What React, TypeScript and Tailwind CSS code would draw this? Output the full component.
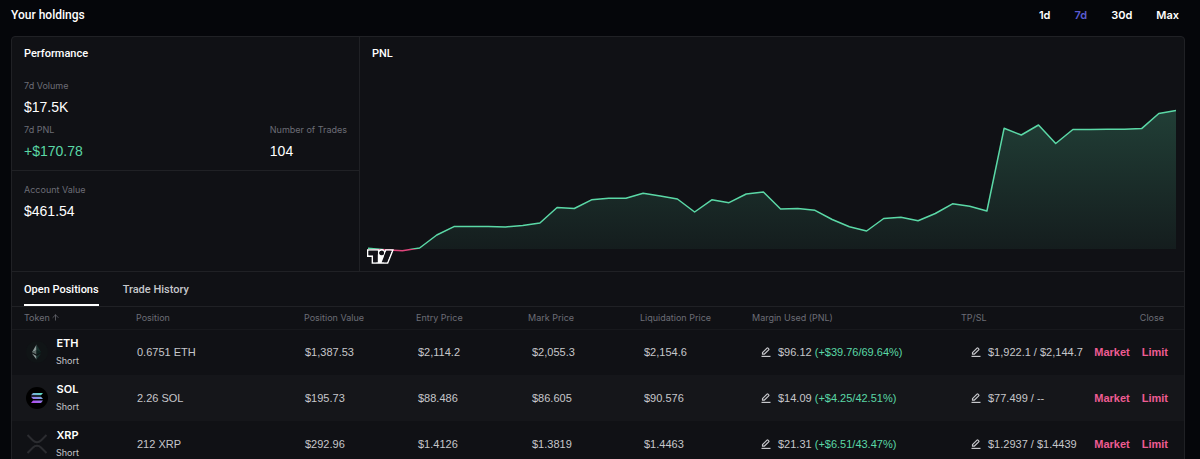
import { useState } from "react";
import clsx from "clsx";
import { ArrowUp } from "lucide-react";

type Position = {
  token: string;
  size: string;
  value: string;
  entry: string;
  mark: string;
  liquidation: string;
  margin: string;
  pnl: string;
  tpsl: string;
};

const positions: Position[] = [
  {
    token: "ETH",
    size: "0.6751 ETH",
    value: "$1,387.53",
    entry: "$2,114.2",
    mark: "$2,055.3",
    liquidation: "$2,154.6",
    margin: "$96.12",
    pnl: "(+$39.76/69.64%)",
    tpsl: "$1,922.1 / $2,144.7",
  },
  {
    token: "SOL",
    size: "2.26 SOL",
    value: "$195.73",
    entry: "$88.486",
    mark: "$86.605",
    liquidation: "$90.576",
    margin: "$14.09",
    pnl: "(+$4.25/42.51%)",
    tpsl: "$77.499 / --",
  },
  {
    token: "XRP",
    size: "212 XRP",
    value: "$292.96",
    entry: "$1.4126",
    mark: "$1.3819",
    liquidation: "$1.4463",
    margin: "$21.31",
    pnl: "(+$6.51/43.47%)",
    tpsl: "$1.2937 / $1.4439",
  },
];

const ranges = ["1d", "7d", "30d", "Max"];
const tabs = ["Open Positions", "Trade History"];

// PNL samples, in chart units above the zero line
const pnlSeries = [
  0.7, -0.7, -1.7, 1, 14, 22.4, 22.4, 22.4, 22, 23.5, 26, 41.5, 40.5, 49.2,
  50.8, 50.8, 55.7, 53, 50, 37, 49.2, 46.3, 55, 57, 40, 40.5, 38.7, 29.5, 22.2,
  18, 30.5, 31.7, 28.2, 35.5, 45.2, 42.8, 38, 120.7, 114, 124, 105.5, 119.5,
  119.4, 119.7, 119.8, 120.4, 135.5, 138.5,
];

const CHART_W = 808;
const CHART_H = 180;
const ZERO_Y = 158;

const PnlChart = () => {
  const step = CHART_W / (pnlSeries.length - 1);
  const line = pnlSeries
    .map((v, i) => `${(i * step).toFixed(1)},${(ZERO_Y - v).toFixed(1)}`)
    .join(" ");

  return (
    <svg
      viewBox={`0 0 ${CHART_W} ${CHART_H}`}
      preserveAspectRatio="none"
      className="block h-[180px] w-full"
      role="img"
      aria-label="PNL chart"
    >
      <defs>
        <linearGradient id="area" gradientUnits="userSpaceOnUse" x1="0" y1="18" x2="0" y2={ZERO_Y}>
          <stop offset="0" stopColor="#5ad8a6" stopOpacity="0.23" />
          <stop offset="1" stopColor="#5ad8a6" stopOpacity="0.06" />
        </linearGradient>
        <linearGradient id="stroke" gradientUnits="userSpaceOnUse" x1="0" y1="0" x2="0" y2={ZERO_Y * 2}>
          <stop offset="0.5" stopColor="#5ad8a6" />
          <stop offset="0.5" stopColor="#e0457b" />
        </linearGradient>
        <clipPath id="above">
          <rect width={CHART_W} height={ZERO_Y} />
        </clipPath>
      </defs>
      <polygon
        points={`0,${ZERO_Y} ${line} ${CHART_W},${ZERO_Y}`}
        fill="url(#area)"
        clipPath="url(#above)"
      />
      <polyline
        points={line}
        fill="none"
        stroke="url(#stroke)"
        strokeWidth="1.5"
        strokeLinejoin="round"
        vectorEffect="non-scaling-stroke"
      />
    </svg>
  );
};

const TradingViewLogo = () => (
  <svg viewBox="0 0 35 19" className="h-[15px] w-[27px]" fillRule="evenodd" aria-hidden="true">
    <path
      fill="#fff"
      d="M2 0H0v10h6v9h21.4l.5-1.3 6-15 1-2.7H23.7l-.5 1.3-.2.6a5 5 0 0 0-7-.9V0H2Zm20 17h4l5.2-13 .8-2h-7l-1 2.5-.2.5-1.5 3.8-.3.7V17Zm-.8-10a3 3 0 0 0 .7-2.7A3 3 0 1 0 16.8 7h4.4ZM14 7V2H2v6h6v9h4V7h2Z"
    />
    <path
      fill="#131319"
      d="M14 2H2v6h6v9h6V2Zm12 15h-7l6-15h7l-6 15Zm-7-9a3 3 0 1 0 0-6 3 3 0 0 0 0 6Z"
    />
  </svg>
);

const TokenIcon = ({ token }: { token: string }) => {
  if (token === "ETH") {
    return (
      <svg viewBox="0 0 24 24" className="size-6" aria-hidden="true">
        <circle cx="12" cy="12" r="11" fill="#101416" />
        <path d="M11.500 4.500v5.700L7 12.200Z" fill="#8b9a99" />
        <path d="M11.500 4.500l4.500 7.700-4.500-2Z" fill="#16302c" />
        <path d="M7 12.200l4.500-2v4.400Z" fill="#5c6866" />
        <path d="M11.500 10.200l4.500 2-4.500 2.400Z" fill="#0d2320" />
        <path d="M7 13.400l4.500 2.600V19.500Z" fill="#8b9a99" />
        <path d="M16 13.400l-4.500 2.600V19.500Z" fill="#16302c" />
      </svg>
    );
  }
  if (token === "SOL") {
    return (
      <svg viewBox="0 0 24 24" className="size-6" aria-hidden="true">
        <defs>
          <linearGradient id="sol" gradientUnits="userSpaceOnUse" x1="10" y1="17" x2="14" y2="7">
            <stop offset="0" stopColor="#b04df0" />
            <stop offset="0.5" stopColor="#8b8ce6" />
            <stop offset="1" stopColor="#5fd9c4" />
          </linearGradient>
        </defs>
        <circle cx="12" cy="12" r="11" fill="#000" />
        <path
          fill="url(#sol)"
          d="M8 7h10l-2 2.300H6Zm-2 3.800h10l2 2.300H8Zm2 3.800h10l-2 2.300H6Z"
        />
      </svg>
    );
  }
  return (
    <svg
      viewBox="0 0 24 24"
      className="size-6"
      fill="none"
      stroke="#2b2c30"
      strokeWidth="2"
      aria-hidden="true"
    >
      <path d="M2.500 3l5.500 5.500a5.700 5.700 0 0 0 8 0L21.500 3" />
      <path d="M2.500 21l5.500-5.500a5.700 5.700 0 0 1 8 0l5.500 5.500" />
    </svg>
  );
};

const EditButton = ({ label }: { label: string }) => (
  <button type="button" aria-label={label} className="shrink-0 text-[#c6c7cb]">
    <svg
      viewBox="0 0 10 10"
      className="size-[10px]"
      fill="none"
      stroke="currentColor"
      strokeWidth="1.200"
      strokeLinejoin="round"
      aria-hidden="true"
    >
      <path d="M1.500 7.200V5.600L6 1.100q.5-.5 1 0l.7.7q.5.500 0 1L3.200 7.200Z" />
      <path d="M.5 9.400h9" />
    </svg>
  </button>
);

const Stat = ({
  label,
  value,
  positive,
}: {
  label: string;
  value: string;
  positive?: boolean;
}) => (
  <div>
    <div className="font-[Inter,sans-serif] text-[9px] leading-[14px] text-[#6c6d75]">{label}</div>
    <div
      className={clsx(
        "mt-1 text-[14px] leading-5",
        positive ? "text-[#5ad8a6]" : "text-white"
      )}
    >
      {value}
    </div>
  </div>
);

const PositionsTable = () => (
  <table className="w-full table-fixed border-collapse text-left whitespace-nowrap">
    <colgroup>
      <col className="w-28" />
      <col className="w-42" />
      <col className="w-28" />
      <col className="w-28" />
      <col className="w-28" />
      <col className="w-28" />
      <col className="w-[209px]" />
      <col className="w-[132px]" />
      <col />
    </colgroup>
    <thead>
      <tr className="h-[22px] border-b border-[#18191d] font-[Inter,sans-serif] text-[9px] leading-3 text-[#6c6d75] [&>th]:pl-3 [&>th]:font-normal">
        <th>
          <button type="button" className="flex items-center gap-px">
            Token <ArrowUp size={9} aria-hidden="true" />
          </button>
        </th>
        <th>Position</th>
        <th>Position Value</th>
        <th>Entry Price</th>
        <th>Mark Price</th>
        <th>Liquidation Price</th>
        <th>Margin Used (PNL)</th>
        <th>TP/SL</th>
        <th className="pr-5 text-right">Close</th>
      </tr>
    </thead>
    <tbody>
      {positions.map((p) => (
        <tr
          key={p.token}
          className="h-[46px] text-[11px] leading-4 text-[#c6c7cb] even:bg-[#15161a]"
        >
          <td className="pl-[13px]">
            <div className="flex items-center gap-[7px]">
              <TokenIcon token={p.token} />
              <div className="text-center">
                <div className="font-[Inter,sans-serif] font-semibold text-white">{p.token}</div>
                <div className="mt-0.5 font-[Inter,sans-serif] text-[9px]">Short</div>
              </div>
            </div>
          </td>
          <td className="pl-[13px]">{p.size}</td>
          <td className="pl-[13px]">{p.value}</td>
          <td className="pl-[14px]">{p.entry}</td>
          <td className="pl-4">{p.mark}</td>
          <td className="pl-4">{p.liquidation}</td>
          <td className="pl-[21px]">
            <div className="flex items-center gap-[7px]">
              <EditButton label={`Edit ${p.token} margin`} />
              <span>
                {p.margin} <span className="text-[#5ad8a6]">{p.pnl}</span>
              </span>
            </div>
          </td>
          <td className="pl-[22px]">
            <div className="flex items-center gap-[7px]">
              <EditButton label={`Edit ${p.token} TP/SL`} />
              <span>{p.tpsl}</span>
            </div>
          </td>
          <td className="pr-4">
            <div className="flex justify-end gap-3 font-bold text-[#ee5c93]">
              <button type="button">Market</button>
              <button type="button">Limit</button>
            </div>
          </td>
        </tr>
      ))}
    </tbody>
  </table>
);

const App = () => {
  const [range, setRange] = useState("7d");
  const [tab, setTab] = useState("Open Positions");

  return (
    <main className="h-screen overflow-hidden bg-[#05060a] pr-[15px] pl-[11px] font-['Liberation_Sans',Arial,sans-serif] text-white">
      <header className="flex h-9 items-center justify-between pr-1.5 pb-1.5">
        <h1 className="font-[Roboto,sans-serif] text-[12px] leading-4 font-medium">
          Your holdings
        </h1>
        <div className="flex gap-6 font-[Inter,sans-serif] text-[11px] leading-4 font-semibold">
          {ranges.map((r) => (
            <button
              key={r}
              type="button"
              onClick={() => setRange(r)}
              className={r === range ? "text-[#5a5bd0]" : "text-white"}
            >
              {r}
            </button>
          ))}
        </div>
      </header>

      <div className="rounded-t-sm border border-[#202125] bg-[#101115]">
        <div className="flex border-b border-[#202125]">
          <section className="w-[348px] shrink-0 border-r border-[#202125]">
            <div className="border-b border-[#202125] px-3 pt-[9px] pb-[9px]">
              <h2 className="font-[Roboto,sans-serif] text-[11px] leading-4 font-medium">
                Performance
              </h2>
              <div className="mt-[17px] flex flex-col gap-1.5">
                <Stat label="7d Volume" value="$17.5K" />
                <div className="flex justify-between">
                  <Stat label="7d PNL" value="+$170.78" positive />
                  <Stat label="Number of Trades" value="104" />
                </div>
              </div>
            </div>
            <div className="px-3 pt-3">
              <Stat label="Account Value" value="$461.54" />
            </div>
          </section>

          <section className="min-w-0 flex-1">
            <h2 className="px-3 pt-[9px] font-[Roboto,sans-serif] text-[11px] leading-4 font-medium">
              PNL
            </h2>
            <div className="relative mt-[29px] px-2">
              <PnlChart />
              <a
                href="https://www.tradingview.com/"
                aria-label="Charting by TradingView"
                className="absolute bottom-[7px] left-[7px]"
              >
                <TradingViewLogo />
              </a>
            </div>
          </section>
        </div>

        <nav className="flex gap-6 border-b border-[#202125] px-3 font-[Roboto,sans-serif]">
          {tabs.map((t) => (
            <button
              key={t}
              type="button"
              onClick={() => setTab(t)}
              className={clsx(
                "h-[34px] border-b-2 pt-[3px] text-[11px] leading-4 font-medium",
                t === tab ? "border-white text-white" : "border-transparent text-[#c6c7cb]"
              )}
            >
              {t}
            </button>
          ))}
        </nav>

        <PositionsTable />
      </div>
    </main>
  );
};

export default App;
